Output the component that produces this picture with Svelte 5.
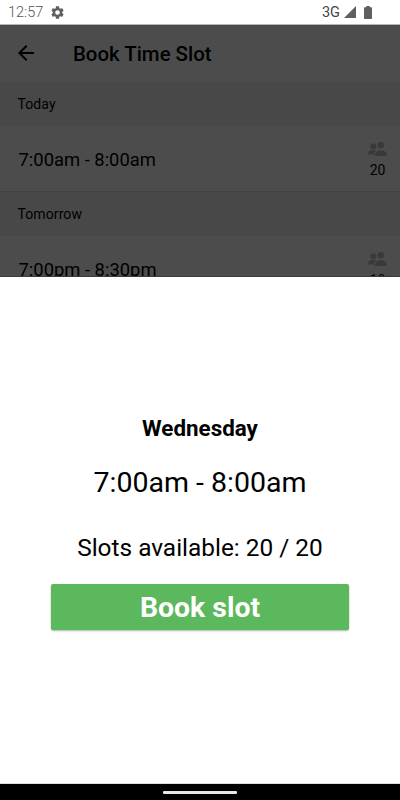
<script lang="ts">
	const days = [
		{ name: 'Today', time: '7:00am - 8:00am', spaces: 20 },
		{ name: 'Tomorrow', time: '7:00pm - 8:30pm', spaces: 18 }
	];

	const selected = { day: 'Wednesday', time: '7:00am - 8:00am', available: 20, total: 20 };
</script>

<div class="screen">
	<div class="status-bar">
		<span class="clock">12:57</span>
		<svg class="gear" viewBox="0 0 24 24" width="15" height="15">
			<path fill-rule="evenodd" d="M19.43 12.98c.04-.32.07-.64.07-.98s-.03-.66-.07-.98l2.11-1.65c.19-.15.24-.42.12-.64l-2-3.46c-.12-.22-.39-.3-.61-.22l-2.49 1c-.52-.4-1.08-.73-1.69-.98l-.38-2.65C14.46 2.18 14.25 2 14 2h-4c-.25 0-.46.18-.49.42l-.38 2.65c-.61.25-1.17.59-1.69.98l-2.49-1c-.23-.09-.49 0-.61.22l-2 3.46c-.13.22-.07.49.12.64l2.11 1.65c-.04.32-.07.65-.07.98s.03.66.07.98l-2.11 1.65c-.19.15-.24.42-.12.64l2 3.46c.12.22.39.3.61.22l2.49-1c.52.4 1.08.73 1.69.98l.38 2.65c.03.24.24.42.49.42h4c.25 0 .46-.18.49-.42l.38-2.65c.61-.25 1.17-.59 1.69-.98l2.49 1c.23.09.49 0 .61-.22l2-3.46c.12-.22.07-.49-.12-.64l-2.11-1.65zM12 15.700a3.700 3.700 0 1 1 0-7.400 3.700 3.700 0 0 1 0 7.400z" />
		</svg>
		<span class="network">3G</span>
		<svg class="signal" viewBox="0 0 12 12" width="12" height="12">
			<path d="M12 0v12H0z" />
		</svg>
		<svg class="battery" viewBox="0 0 8 13" width="8" height="13">
			<path d="M2.3 0h3.4v1.2H7c.6 0 1 .4 1 1V12c0 .6-.4 1-1 1H1c-.6 0-1-.4-1-1V2.200c0-.6.4-1 1-1h1.300z" />
		</svg>
	</div>

	<div class="page">
		<header class="toolbar">
			<svg class="back" viewBox="0 0 16 16" width="16" height="16">
				<path d="M16 8H1.500M8.700 .7L1.400 8l7.300 7.300" />
			</svg>
			<h1>Book Time Slot</h1>
		</header>
		{#each days as day}
			<h2 class="day">{day.name}</h2>
			<div class="slot">
				<span class="time">{day.time}</span>
				<div class="spaces">
					<svg viewBox="0 0 19 14" width="19" height="14">
						<circle cx="5.300" cy="4.200" r="2.900" />
						<circle cx="12.800" cy="3.300" r="3.300" />
						<path d="M0 12.500c0-3.100 2.200-4.700 5.300-4.700 1.200 0 2.200.2 3 .7-1.300.9-2.200 2.200-2.500 4z" />
						<path d="M6.700 14c0-3.700 2.500-5.700 6.100-5.700s6.200 2 6.200 5.700z" />
					</svg>
					<span>{day.spaces}</span>
				</div>
			</div>
		{/each}
		<div class="backdrop"></div>
	</div>

	<main class="sheet">
		<h2>{selected.day}</h2>
		<p class="sheet-time">{selected.time}</p>
		<p class="available">Slots available: {selected.available} / {selected.total}</p>
		<button>Book slot</button>
	</main>

	<div class="nav-bar"><span></span></div>
</div>

<style>
	:global(body) {
		margin: 0;
		background: #fff;
	}

	.screen {
		display: flex;
		flex-direction: column;
		width: 400px;
		height: 800px;
		overflow: hidden;
		font-family: Roboto, sans-serif;
		color: #000;
	}

	h1,
	h2,
	p {
		margin: 0;
	}

	svg {
		display: block;
	}

	.status-bar {
		flex: none;
		box-sizing: border-box;
		display: flex;
		align-items: center;
		height: 25px;
		padding: 0 28px 0 8px;
		border-bottom: 1px solid #b5b5b5;
		font-size: 14.5px;
		color: #555;
		fill: #5f5f5f;
	}

	.clock {
		width: 42px;
		padding-top: 1px;
		font-weight: 300;
	}

	.network {
		margin-left: auto;
		color: #444;
	}

	.signal {
		margin-left: 4px;
	}

	.battery {
		margin-left: 8px;
	}

	/* List behind the sheet */
	.page {
		position: relative;
		flex: none;
		height: 252px;
		overflow: hidden;
	}

	.backdrop {
		position: absolute;
		inset: 0;
		background: rgba(0, 0, 0, 0.7);
		border-bottom: 1px solid #3c3c3c;
		box-sizing: border-box;
	}

	.toolbar {
		display: flex;
		align-items: center;
		height: 56px;
		padding: 0 0 1px 18px;
	}

	.back {
		fill: none;
		stroke: #000;
		stroke-width: 2;
	}

	.toolbar h1 {
		margin-left: 39px;
		padding-top: 1px;
		font-size: 20.4px;
		font-weight: 500;
	}

	.day {
		box-sizing: border-box;
		height: 44px;
		padding-left: 17.5px;
		background: #f0f0f0;
		font-size: 14px;
		font-weight: 400;
		line-height: 45px;
		letter-spacing: 0.1px;
	}

	.slot {
		box-sizing: border-box;
		display: flex;
		justify-content: space-between;
		height: 66px;
		padding: 0 13px 0 18.5px;
		border-bottom: 1px solid #ddd;
	}

	.time {
		font-size: 18.4px;
		line-height: 68px;
	}

	.spaces {
		display: flex;
		flex-direction: column;
		align-items: center;
		padding-top: 16px;
		font-size: 14px;
		line-height: 16px;
	}

	.spaces svg {
		margin-bottom: 6px;
		fill: #c0c0c0;
	}

	/* Booking sheet */
	.sheet {
		flex: 1;
		box-sizing: border-box;
		display: flex;
		flex-direction: column;
		align-items: center;
		padding-top: 137px;
		border-bottom: 1px solid #ddd;
		background: #fff;
	}

	.sheet h2 {
		font-size: 22.4px;
		font-weight: 700;
		line-height: 28px;
	}

	.sheet-time {
		margin-top: 24px;
		font-size: 28.5px;
		line-height: 34px;
	}

	.available {
		margin-top: 33px;
		font-size: 24.4px;
		line-height: 30px;
	}

	button {
		width: 298px;
		height: 46px;
		margin-top: 21px;
		padding: 1px 0 0;
		border: none;
		border-radius: 2px;
		background: #5cb85c;
		box-shadow: 0 1px 2px rgba(0, 0, 0, 0.3);
		color: #fff;
		font-family: inherit;
		font-size: 28.4px;
		font-weight: 700;
	}

	.nav-bar {
		flex: none;
		display: flex;
		justify-content: center;
		height: 16px;
		background: #000;
	}

	.nav-bar span {
		width: 74px;
		height: 3px;
		margin-top: 7px;
		border-radius: 1px;
		background: #e8e8e8;
	}
</style>
